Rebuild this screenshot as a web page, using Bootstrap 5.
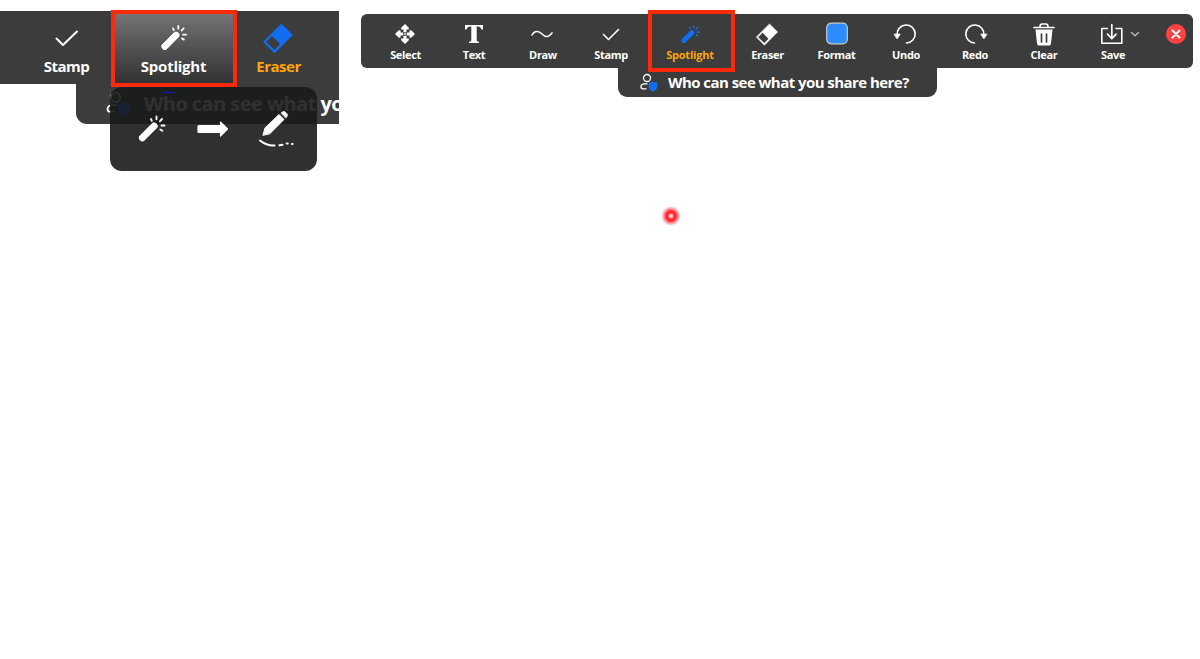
<!DOCTYPE html>
<html lang="en">
<head>
<meta charset="utf-8">
<meta name="viewport" content="width=device-width, initial-scale=1">
<title>Annotation toolbar</title>
<link href="https://cdn.jsdelivr.net/npm/bootstrap@5.3.0/dist/css/bootstrap.min.css" rel="stylesheet">
<style>
  body { font-family: "Open Sans", "Noto Sans", sans-serif; font-weight: 700; color: #fff; height: 659px; overflow: hidden; line-height: 1; }
  svg { display: block; overflow: visible; fill: none; stroke-linecap: round; stroke-linejoin: round; flex: none; }
  .orange { color: #ffa60a; }
  .panel { background: #3b3c3b; }

  .zoomed { width: 339px; height: 160px; margin-top: 11px; }
  .zoombar { height: 73px; display: grid; grid-template-columns: 19px 95px 119px 91px; }
  .zoombar .tool { height: 73px; padding-top: 8px; font-size: 15px; letter-spacing: -.5px; }
  .zoombar .glyph { height: 40px; padding-bottom: 2px; }
  .zoombar .tool.lit { background: linear-gradient(#757675, #555655 45%, #303130); letter-spacing: -.25px; }
  .zoomask { width: 263px; height: 40px; margin-left: 76px; border-radius: 0 0 0 11px; font-size: 20px; letter-spacing: -.55px; }
  .popup { left: 110px; top: 76px; width: 207px; height: 84px; border-radius: 12px; background: rgba(25,25,27,.9); }
  .frame { border: 4px solid #fa2a0a; pointer-events: none; }
  .frame-a { left: 111px; top: -1px; width: 126px; height: 77px; }
  .frame-b { left: 287px; top: -4px; width: 87px; height: 62px; }

  .sharing { width: 832px; margin: 14px 0 0 22px; }
  .mainbar { height: 54px; border-radius: 6px; padding-left: 10.5px; display: grid; grid-template-columns: 68px 69px 69px 67px 91px 64px 74px 65px 73px 65px 73px 53px; }
  .mainbar .tool { height: 54px; padding-top: 7px; font-size: 11px; letter-spacing: -.35px; }
  .mainbar .tool.lit { letter-spacing: -.2px; }
  .mainbar .glyph { height: 28px; padding-bottom: 2px; }
  .mainask { width: 319px; height: 29px; margin-left: 257px; border-radius: 0 0 9px 9px; font-size: 15px; letter-spacing: -.55px; }
  .tool { white-space: nowrap; }
  .pointer { width: 20px; height: 20px; margin: 109px 0 0 300px; border-radius: 50%; background: radial-gradient(circle, #fff 0, #ffb0b0 1.5px, #ff2030 3.5px, #ff2a38 5px, rgba(255,70,80,.5) 7.5px, rgba(255,120,120,0) 10px); }
</style>
</head>
<body class="bg-white d-flex align-items-start">

<svg width="0" height="0" class="position-absolute">
  <defs>
    <g id="wand">
      <path d="M2.500 23 17 8.500" stroke="currentColor" stroke-width="6.600" stroke-linecap="butt"/>
      <path d="M3.800 22 15.800 10" stroke="currentColor" stroke-width="6.600"/>
      <path d="M12.500 3l.8 1.800M18 .5v2.800M23.500 3 21.500 5.200M23 9.500H26M21.800 13.500l2 1.200" stroke="currentColor" stroke-width="1.900"/>
    </g>
    <g id="eraser">
      <path d="M18.500 0 29.500 11 11.500 29 .5 18z" fill="currentColor" stroke="currentColor" stroke-width=".6"/>
      <path d="M9 12 17 20 11.500 26 3 18z" fill="#3b3c3b"/>
    </g>
    <g id="viewer">
      <circle cx="7" cy="4" r="3.500" stroke="currentColor" stroke-width="1.300"/>
      <path d="M7 9.800H4.500C2 9.800 1 11.500 1 12.700 1 14.300 2 14.800 3 14.800H6" stroke="currentColor" stroke-width="1.300"/>
      <path d="M13 7.500 17.300 9v3.500c0 2.800-1.900 4.200-4.300 5-2.400-.8-4.300-2.200-4.300-5V9z" fill="#116ef0"/>
    </g>
  </defs>
</svg>

<section class="zoomed position-relative flex-shrink-0">
  <div class="zoombar panel">
    <span></span>
    <div class="tool d-flex flex-column align-items-center">
      <div class="glyph d-flex align-items-center"><svg width="24" height="18" viewBox="0 0 24 18"><path d="M1.500 9.500 8 16 22 2.500" stroke="#fff" stroke-width="2"/></svg></div>
      <span>Stamp</span>
    </div>
    <div class="tool lit d-flex flex-column align-items-center">
      <div class="glyph d-flex align-items-center"><svg width="26" height="26" viewBox="0 0 27 26"><use href="#wand"/></svg></div>
      <span>Spotlight</span>
    </div>
    <div class="tool d-flex flex-column align-items-center">
      <div class="glyph d-flex align-items-center"><svg width="30" height="30" viewBox="0 0 30 30" color="#116ef0" style="margin:2px 2px 0 0"><use href="#eraser"/></svg></div>
      <span class="orange">Eraser</span>
    </div>
  </div>
  <div class="zoomask panel d-flex align-items-center text-nowrap">
    <svg width="23" height="24" viewBox="0 0 17 18" style="margin-left:30px"><use href="#viewer"/></svg>
    <span style="margin-left:15px">Who can see what yo</span>
  </div>
  <div class="popup position-absolute">
    <svg width="207" height="84" viewBox="0 0 207 84">
      <path d="M53.500 5.500h12" stroke="#171a9c" stroke-width="1.500"/>
      <g transform="translate(28.500 29)"><use href="#wand"/></g>
      <path d="M89 38.500h21.500v-3.500l7 7-7 7V45.500H89q-1 0-1-1v-5Q88 38.500 89 38.500z" fill="#fff" stroke="#fff" stroke-width="1.200"/>
      <path d="M153 48l2-7L169 27.500l5 5L160 46.500z" fill="#fff" stroke="#fff"/>
      <path d="M171 26 172.500 24.700q1.500-1 3 .5l1.500 1.500q1.500 1.500 0 3L175.900 31z" fill="#fff" stroke="#fff" stroke-width=".5"/>
      <path d="M150 53.500q7 5.500 14.500 5M169.500 58.300l3-.5M176.700 56.500h1M182 57h.6" stroke="#fff" stroke-width="2"/>
    </svg>
  </div>
  <div class="frame frame-a position-absolute"></div>
</section>

<section class="sharing position-relative flex-shrink-0">
  <div class="mainbar panel">
    <div class="tool d-flex flex-column align-items-center">
      <div class="glyph d-flex align-items-center"><svg width="20" height="20" viewBox="0 0 20 20" style="margin-right:1px"><g fill="#fff"><path id="tip" d="M10 0 13.800 3.800V5.500H11.500V8.200H8.500V5.500H6.200V3.800z"/><use href="#tip" transform="rotate(90 10 10)"/><use href="#tip" transform="rotate(180 10 10)"/><use href="#tip" transform="rotate(270 10 10)"/><rect x="9.200" y="9.200" width="1.600" height="1.600"/></g></svg></div>
      <span>Select</span>
    </div>
    <div class="tool d-flex flex-column align-items-center">
      <div class="glyph d-flex align-items-center"><svg width="18" height="18" viewBox="0 0 18 18"><path d="M0 0H18V4.500H16.500Q15.500 1.500 13 1.500H11.700V15.500Q12 16.800 14 16.800V18H4V16.800Q6 16.800 6.300 15.500V1.500H5Q2.500 1.500 1.500 4.500H0z" fill="#fff"/></svg></div>
      <span>Text</span>
    </div>
    <div class="tool d-flex flex-column align-items-center">
      <div class="glyph d-flex align-items-center"><svg width="22" height="8" viewBox="0 0 22 8" style="margin-right:2px"><path d="M1 5C3 1 7 0 11 4S18 7 21 3" stroke="#fff" stroke-width="1.600"/></svg></div>
      <span>Draw</span>
    </div>
    <div class="tool d-flex flex-column align-items-center">
      <div class="glyph d-flex align-items-center"><svg width="18" height="14" viewBox="0 0 18 14"><path d="M1.500 7.500 6.500 12.500 16.500 2.500" stroke="#fff" stroke-width="1.600"/></svg></div>
      <span>Stamp</span>
    </div>
    <div class="tool lit d-flex flex-column align-items-center">
      <div class="glyph d-flex align-items-center"><svg width="19" height="19" viewBox="0 0 27 26" color="#116ef0"><use href="#wand"/></svg></div>
      <span class="orange">Spotlight</span>
    </div>
    <div class="tool d-flex flex-column align-items-center">
      <div class="glyph d-flex align-items-center"><svg width="22" height="22" viewBox="0 0 30 30" style="margin:1px 1px 0 0"><use href="#eraser"/></svg></div>
      <span>Eraser</span>
    </div>
    <div class="tool d-flex flex-column align-items-center">
      <div class="glyph d-flex align-items-center"><svg width="22" height="22" viewBox="0 0 22 22"><rect x=".7" y=".2" width="20.600" height="20.600" rx="4.500" fill="#2d8cff" stroke="#c4cbd2" stroke-width="1.200"/></svg></div>
      <span>Format</span>
    </div>
    <div class="tool d-flex flex-column align-items-center">
      <div class="glyph d-flex align-items-center"><svg width="22" height="20" viewBox="0 0 22 20" style="margin-right:3px"><path d="M3.200 11A9 9 0 1 1 12.500 19" stroke="#fff" stroke-width="1.600"/><path d="M.5 10.200H6.100L3.300 14.500z" fill="#fff" stroke="#fff"/></svg></div>
      <span>Undo</span>
    </div>
    <div class="tool d-flex flex-column align-items-center">
      <div class="glyph d-flex align-items-center"><svg width="22" height="20" viewBox="0 0 22 20" style="margin-left:1px"><path d="M18.800 11A9 9 0 1 0 9.500 19" stroke="#fff" stroke-width="1.600"/><path d="M21.500 10.200H15.900L18.700 14.500z" fill="#fff" stroke="#fff"/></svg></div>
      <span>Redo</span>
    </div>
    <div class="tool d-flex flex-column align-items-center">
      <div class="glyph d-flex align-items-center"><svg width="22" height="23" viewBox="0 0 22 23"><path d="M1 4.500H21M7 4Q7 1 9 1H13Q15 1 15 4" stroke="#fff" stroke-width="1.700"/><path d="M2.500 6.500H19.500L18 20.500Q17.800 22.500 16 22.500H6Q4.200 22.500 4 20.500z" fill="#fff"/><path d="M8.500 11V19M13.500 11V19" stroke="#3b3c3b" stroke-width="1.700"/></svg></div>
      <span>Clear</span>
    </div>
    <div class="tool d-flex flex-column align-items-center">
      <div class="glyph d-flex align-items-center"><svg width="22" height="21" viewBox="0 0 22 21" style="margin-right:2px"><path d="M6.500 4.500H.8V19.200H20.800V4.500H15" stroke="#fff" stroke-width="1.600"/><path d="M10.800 .7V14M6.500 10.200 10.800 14.700 15.100 10.200" stroke="#fff" stroke-width="1.700"/><path d="M30.500 8.500 34 11.800 37.500 8.500" stroke="#bbb" stroke-width="1.400"/></svg></div>
      <span>Save</span>
    </div>
    <div class="tool d-flex flex-column align-items-center">
      <div class="glyph d-flex align-items-center"><svg width="20" height="20" viewBox="0 0 20 20"><circle cx="10" cy="10" r="10" fill="#ff4242"/><path d="M6.500 6.500l7 7M13.500 6.500l-7 7" stroke="#fff" stroke-width="2"/></svg></div>
    </div>
  </div>
  <div class="mainask panel d-flex align-items-center text-nowrap">
    <svg width="17" height="18" viewBox="0 0 17 18" style="margin-left:22px"><use href="#viewer"/></svg>
    <span style="margin-left:11px">Who can see what you share here?</span>
  </div>
  <div class="frame frame-b position-absolute"></div>
  <div class="pointer"></div>
</section>

<script src="https://cdn.jsdelivr.net/npm/bootstrap@5.3.0/dist/js/bootstrap.bundle.min.js"></script>
</body>
</html>
